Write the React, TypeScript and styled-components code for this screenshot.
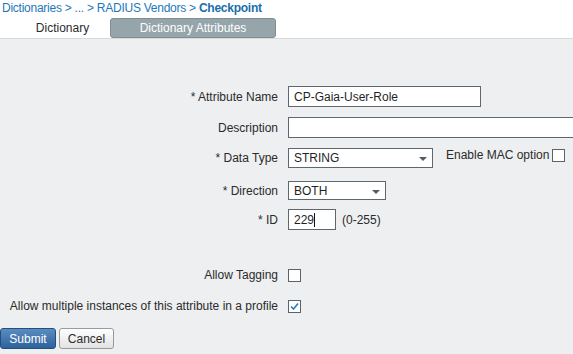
import React from 'react';
import styled, { createGlobalStyle } from 'styled-components';

const GlobalStyle = createGlobalStyle`
  html, body {
    margin: 0;
    padding: 0;
    background: #eeeff0;
    font-family: 'Liberation Sans', Arial, Helvetica, sans-serif;
    font-size: 12px;
    color: #2b2b2b;
  }
  #root {
    min-height: 354px;
    overflow: hidden;
  }
`;

const Header = styled.div`
  background: #ffffff;
  border-bottom: 1px solid #d9d9d9;
  height: 39px;
  box-sizing: border-box;
`;

const Breadcrumb = styled.div`
  height: 17px;
  line-height: 17px;
  padding-left: 2px;
  letter-spacing: -0.25px;
  color: #1f78b9;
  white-space: nowrap;
`;

const Crumb = styled.span<{ current?: boolean }>`
  font-weight: ${p => (p.current ? 700 : 400)};
  color: ${p => (p.current ? '#1a6eab' : '#1f78b9')};
`;

const Tabs = styled.div`
  display: flex;
  align-items: flex-start;
  padding-top: 1px;
`;

const Tab = styled.div<{ active?: boolean }>`
  display: flex;
  align-items: center;
  justify-content: center;
  height: 20px;
  box-sizing: border-box;
  color: ${p => (p.active ? '#ffffff' : '#2b2b2b')};
  background: ${p => (p.active ? '#95a5aa' : 'transparent')};
  border: 1px solid ${p => (p.active ? '#7e9096' : 'transparent')};
  border-radius: 3px;
  width: ${p => (p.active ? '166px' : '110px')};
  padding-left: ${p => (p.active ? '0' : '15px')};
`;

const Form = styled.div`
  display: flex;
  flex-direction: column;
  padding-top: 47px;
`;

const Row = styled.div<{ gap: number; h?: number }>`
  display: grid;
  grid-template-columns: 278px 1fr;
  column-gap: 10px;
  align-items: center;
  margin-top: ${p => p.gap}px;
  height: ${p => p.h ?? 21}px;
`;

const Label = styled.label`
  text-align: right;
  white-space: nowrap;
  color: #2b2b2b;
`;

const Field = styled.div`
  display: flex;
  align-items: center;
  gap: 6px;
  white-space: nowrap;
`;

const TextInput = styled.div<{ w: number }>`
  display: flex;
  align-items: center;
  width: ${p => p.w}px;
  height: 21px;
  box-sizing: border-box;
  border: 1px solid #5e666e;
  background: #ffffff;
  padding-left: 5px;
  color: #1f1f1f;
  flex-shrink: 0;
`;

const Caret = styled.span`
  display: inline-block;
  width: 1px;
  height: 14px;
  background: #111;
`;

const Select = styled.div<{ w: number; h: number }>`
  position: relative;
  display: flex;
  align-items: center;
  width: ${p => p.w}px;
  height: ${p => p.h}px;
  box-sizing: border-box;
  border: 1px solid #5e666e;
  background: #ffffff;
  padding-left: 5px;
  color: #1f1f1f;
  flex-shrink: 0;

  &::after {
    content: '';
    position: absolute;
    right: 5px;
    top: 50%;
    margin-top: -1px;
    border-left: 4px solid transparent;
    border-right: 4px solid transparent;
    border-top: 4px solid #555b61;
  }
`;

const TopField = styled.div`
  display: flex;
  align-items: flex-start;
  gap: 13px;
  height: 20px;
  white-space: nowrap;
`;

const Inline = styled.span`
  display: flex;
  align-items: flex-start;
  gap: 3px;
  line-height: 14px;
`;

const Check = styled.span`
  display: inline-flex;
  align-items: center;
  justify-content: center;
  width: 13px;
  height: 13px;
  box-sizing: border-box;
  border: 1px solid #5a626a;
  background: #ffffff;
  flex-shrink: 0;
  margin-top: 1px;
`;

const Hint = styled.span`
  color: #2b2b2b;
`;

const Buttons = styled.div`
  display: flex;
  gap: 3px;
  margin-top: 12px;
`;

const Button = styled.button<{ primary?: boolean }>`
  height: 21px;
  box-sizing: border-box;
  font-family: 'Liberation Sans', Arial, sans-serif;
  font-size: 12px;
  border-radius: 3px;
  padding: 0;
  width: ${p => (p.primary ? '56px' : '55px')};
  color: ${p => (p.primary ? '#ffffff' : '#2b2b2b')};
  border: 1px solid ${p => (p.primary ? '#234f7e' : '#9a9a9a')};
  background: ${p =>
    p.primary
      ? 'linear-gradient(#5a8cc0, #2d629b)'
      : 'linear-gradient(#ffffff, #e2e2e2)'};
`;

const CheckMark = () => (
  <svg width="11" height="11" viewBox="0 0 11 11">
    <path d="M2 5.5 L4.5 8 L9 2.5" fill="none" stroke="#2a7fbf" strokeWidth="1.7" />
  </svg>
);

export default function App() {
  return (
    <>
      <GlobalStyle />
      <Header>
        <Breadcrumb>
          <Crumb>Dictionaries &gt; ... &gt; RADIUS Vendors &gt; </Crumb>
          <Crumb current>Checkpoint</Crumb>
        </Breadcrumb>
        <Tabs>
          <Tab>Dictionary</Tab>
          <Tab active>Dictionary Attributes</Tab>
        </Tabs>
      </Header>
      <Form>
        <Row gap={0}>
          <Label>* Attribute Name</Label>
          <Field>
            <TextInput w={193}>CP-Gaia-User-Role</TextInput>
          </Field>
        </Row>
        <Row gap={10}>
          <Label>Description</Label>
          <Field>
            <TextInput w={300} />
          </Field>
        </Row>
        <Row gap={10} h={20}>
          <Label>* Data Type</Label>
          <TopField>
            <Select w={145} h={20}>STRING</Select>
            <Inline>
              Enable MAC option
              <Check />
            </Inline>
          </TopField>
        </Row>
        <Row gap={13} h={19}>
          <Label>* Direction</Label>
          <Field>
            <Select w={98} h={19}>BOTH</Select>
          </Field>
        </Row>
        <Row gap={9}>
          <Label>* ID</Label>
          <Field>
            <TextInput w={48}>
              229<Caret />
            </TextInput>
            <Hint>(0-255)</Hint>
          </Field>
        </Row>
        <Row gap={35} h={20}>
          <Label>Allow Tagging</Label>
          <Field>
            <Check />
          </Field>
        </Row>
        <Row gap={11} h={20}>
          <Label>Allow multiple instances of this attribute in a profile</Label>
          <Field>
            <Check>
              <CheckMark />
            </Check>
          </Field>
        </Row>
        <Buttons>
          <Button primary>Submit</Button>
          <Button>Cancel</Button>
        </Buttons>
      </Form>
    </>
  );
}
